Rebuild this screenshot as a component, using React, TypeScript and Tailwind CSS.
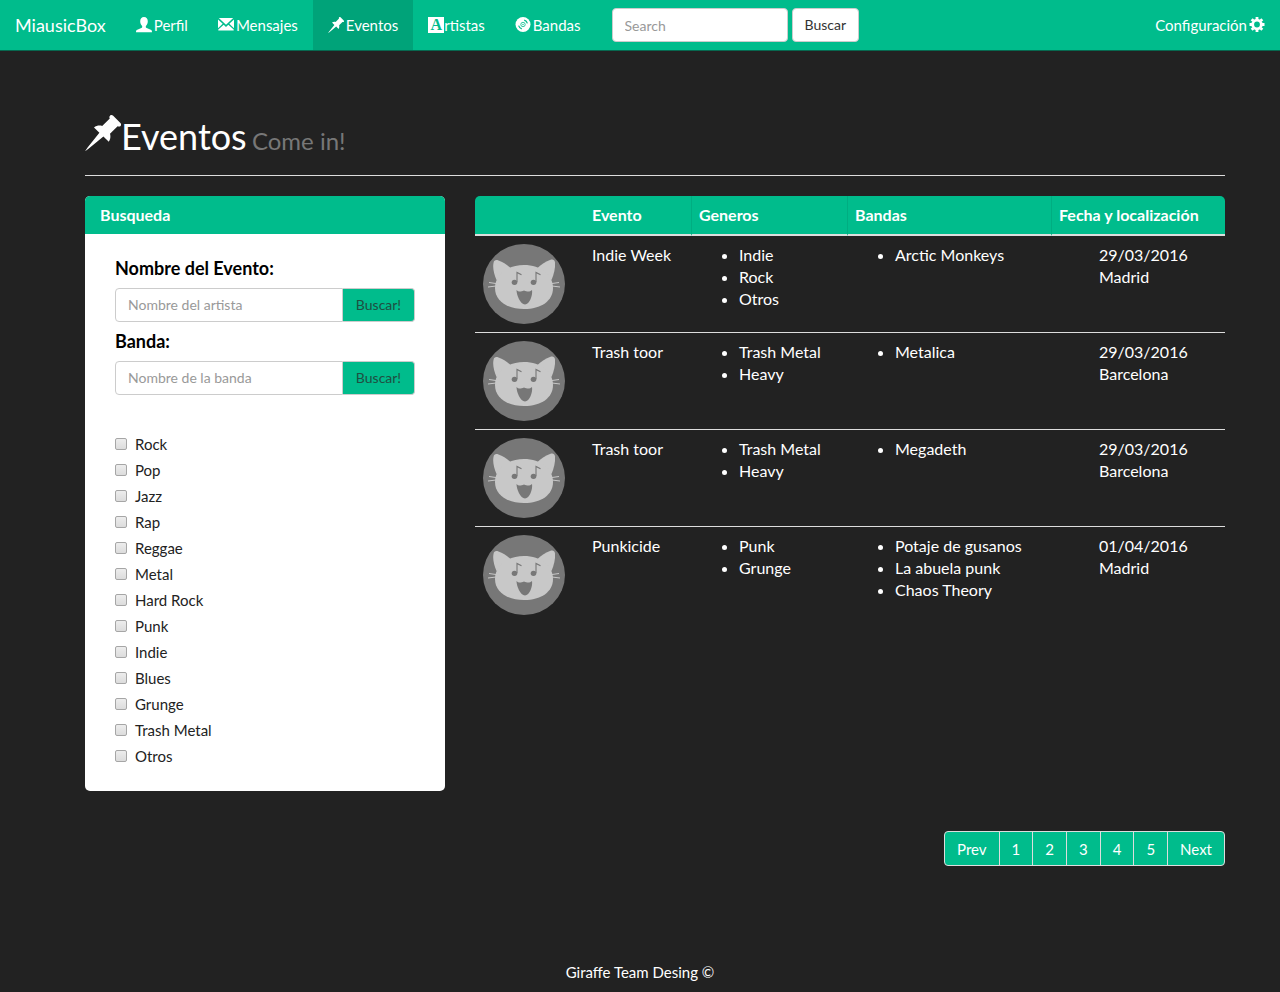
import React from 'react';

type IconProps = { className?: string };

function UserIcon({ className }: IconProps) {
  return (
    <svg viewBox="0 0 16 16" className={className} fill="currentColor" aria-hidden="true">
      <path d="M8 0C5.6 0 4.2 1.7 4.2 4.3C4.2 6.3 5 8 6.1 8.9C6.4 10.2 6.1 10.7 5.3 11.1L1.3 12.7C0.4 13.1 0 13.8 0 15.2H16C16 13.8 15.6 13.1 14.7 12.7L10.7 11.1C9.9 10.7 9.6 10.2 9.9 8.9C11 8 11.8 6.3 11.8 4.3C11.8 1.7 10.4 0 8 0Z" />
    </svg>
  );
}

function EnvelopeIcon({ className }: IconProps) {
  return (
    <svg viewBox="0 0 16 16" className={className} fill="currentColor" aria-hidden="true">
      <path d="M0.8 1H15.2L8 7.8Z" />
      <path d="M0 2.4L4.7 6.8L0 11.2Z" />
      <path d="M16 2.4L11.3 6.8L16 11.2Z" />
      <path d="M0.3 13.5V12.6L5.7 7.8L8 9.9L10.3 7.8L15.7 12.6V13.5Z" />
    </svg>
  );
}

function PinIcon({ className }: IconProps) {
  return (
    <svg viewBox="0 0 36 36" className={className} fill="currentColor" aria-hidden="true">
      <path d="M25.2 0.4C26.2 -0.3 27.4 0 28.2 0.8L35.4 8C36.2 8.8 36.4 10 35.6 10.9C34.8 11.7 33.6 11.6 32.6 11.2L25 18.8C25.8 21.4 25.4 24.4 23.8 26.8L18.4 21.6L3.8 33.6L0 36.4L2.6 32.4L14.4 17.8L9 12.4C11.4 10.6 14.6 10.2 17.2 11L24.8 3.6C24.2 2.6 24.2 1.2 25.2 0.4Z" />
    </svg>
  );
}

function LetterIcon({ className }: IconProps) {
  return (
    <span className={`${className} flex items-center justify-center bg-white font-['Liberation_Serif',serif] text-[16px] leading-4 font-bold text-[#00bc8c]`}>
      A
    </span>
  );
}

function DiscIcon({ className }: IconProps) {
  return (
    <svg viewBox="0 0 16 16" className={className} fill="none" aria-hidden="true">
      <circle cx="8" cy="7.500" r="7.500" fill="currentColor" />
      <circle cx="8" cy="7.500" r="2.200" stroke="#00bc8c" strokeWidth="0.800" />
      <circle cx="8" cy="7.500" r="0.700" fill="#00bc8c" />
      <path d="M9.200 3.200A4.600 4.600 0 0 1 12.400 6.300M3.600 8.700A4.600 4.600 0 0 0 6.800 11.800" stroke="#00bc8c" strokeWidth="1.200" />
    </svg>
  );
}

function GearIcon({ className }: IconProps) {
  return (
    <svg viewBox="0 0 16 16" className={className} fill="none" stroke="currentColor" aria-hidden="true">
      <circle cx="8" cy="7.500" r="4.300" strokeWidth="2.800" />
      <path
        d="M8 0V2.500M8 12.500V15M0.500 7.500H3M13 7.500H15.500M2.700 2.200L4.300 3.800M11.700 11.200L13.300 12.800M13.300 2.200L11.700 3.800M4.300 11.200L2.700 12.800"
        strokeWidth="2.800"
      />
    </svg>
  );
}

function CatAvatar() {
  return (
    <svg viewBox="0 0 82 80" className="h-20 w-[82px]" role="img" aria-label="Evento">
      <ellipse cx="41" cy="40" rx="41" ry="40" fill="#777777" />
      <g fill="#c8c8c8">
        <path d="M13.500 36C11 30 9.500 24 10.500 19C11 16 13 15.500 15.500 16.500C20 18 24 20.500 28 24.500Z" />
        <path d="M68.500 36C71 30 72.500 24 72 18.500C71.500 15.500 69.500 15 67 16C62 18 58 20.500 54 24.500Z" />
        <path d="M41 21C58 21 70 31 70 44C70 57 58 65 41 65C24 65 12 57 12 44C12 31 24 21 41 21Z" />
      </g>
      <path d="M6 38.500L13 39.500M5 43L13 42M76 38.500L69 39.500M77 43L69 42" stroke="#c8c8c8" strokeWidth="1" />
      <g fill="#777777">
        <ellipse cx="31.500" cy="38.300" rx="2.800" ry="2.600" />
        <ellipse cx="50.500" cy="38.300" rx="2.800" ry="2.600" />
        <path d="M33.500 46C36 48.500 38 47.500 41 46.500C44 47.500 46 48.500 49 46C50 51 46.500 60.500 42 60.500C37.500 60.500 33.500 51 33.500 46Z" />
      </g>
      <path d="M34 38V28.500L38.500 30.800M53 38V28.500L57.500 30.800" fill="none" stroke="#777777" strokeWidth="1.100" />
    </svg>
  );
}

const links = [
  { label: 'Perfil', Icon: UserIcon, gap: 'gap-0.5', active: false },
  { label: 'Mensajes', Icon: EnvelopeIcon, gap: 'gap-0.5', active: false },
  { label: 'Eventos', Icon: PinIcon, gap: 'gap-0.5', active: true },
  { label: 'rtistas', Icon: LetterIcon, gap: 'gap-0', active: false },
  { label: 'Bandas', Icon: DiscIcon, gap: 'gap-0.5', active: false },
];

const genres = ['Rock', 'Pop', 'Jazz', 'Rap', 'Reggae', 'Metal', 'Hard Rock', 'Punk', 'Indie', 'Blues', 'Grunge', 'Trash Metal', 'Otros'];

const events = [
  { name: 'Indie Week', genres: ['Indie', 'Rock', 'Otros'], bands: ['Arctic Monkeys'], date: '29/03/2016', city: 'Madrid' },
  { name: 'Trash toor', genres: ['Trash Metal', 'Heavy'], bands: ['Metalica'], date: '29/03/2016', city: 'Barcelona' },
  { name: 'Trash toor', genres: ['Trash Metal', 'Heavy'], bands: ['Megadeth'], date: '29/03/2016', city: 'Barcelona' },
  { name: 'Punkicide', genres: ['Punk', 'Grunge'], bands: ['Potaje de gusanos', 'La abuela punk', 'Chaos Theory'], date: '01/04/2016', city: 'Madrid' },
];

const pages = ['Prev', '1', '2', '3', '4', '5', 'Next'];

function Navbar() {
  return (
    <nav className="flex min-h-[51px] flex-wrap items-stretch border-b border-[#07684f] bg-[#00bc8c] text-[15px] text-white">
      <a href="#" className="flex items-center px-[15px] text-[18px]">MiausicBox</a>
      {links.map(({ label, Icon, gap, active }) => (
        <a
          key={label}
          href="#"
          className={`flex items-center px-[15px] ${gap} ${active ? 'bg-[#00a379]' : ''}`}
        >
          <Icon className="size-4 shrink-0" />
          {label}
        </a>
      ))}
      <form className="flex items-center gap-1 pl-4 text-[14px]" onSubmit={(e) => e.preventDefault()}>
        <input
          type="search"
          aria-label="Search"
          placeholder="Search"
          className="h-[34px] w-44 rounded border border-[#cccccc] bg-white px-3 text-[#555555] placeholder:text-[#999999]"
        />
        <button type="submit" className="h-[34px] rounded border border-[#cccccc] bg-white px-3 text-[#333333]">
          Buscar
        </button>
      </form>
      <a href="#" className="ml-auto flex items-center gap-0.5 px-[15px]">
        Configuración
        <GearIcon className="size-4" />
      </a>
    </nav>
  );
}

function SearchField({ id, label, placeholder }: { id: string; label: string; placeholder: string }) {
  return (
    <div>
      <label htmlFor={id} className="block pb-2 text-[18px] leading-[23px] font-bold text-black">{label}</label>
      <div className="flex h-[34px] text-[14px]">
        <input
          id={id}
          type="text"
          placeholder={placeholder}
          className="min-w-0 flex-1 rounded-l border border-[#cccccc] bg-white px-3 text-[#555555] placeholder:text-[#999999]"
        />
        <button type="button" className="w-[72px] rounded-r border border-l-0 border-[#cccccc] bg-[#00bc8c] text-[#1f4f42]">
          Buscar!
        </button>
      </div>
    </div>
  );
}

function SearchPanel() {
  return (
    <section className="overflow-hidden rounded-[5px] bg-white">
      <h2 className="bg-[#00bc8c] px-[15px] py-2 text-[16px] leading-[22px] font-bold text-white">Busqueda</h2>
      <div className="px-[30px] pt-[23px] pb-[22px]">
        <div className="flex flex-col gap-2">
          <SearchField id="evento" label="Nombre del Evento:" placeholder="Nombre del artista" />
          <SearchField id="banda" label="Banda:" placeholder="Nombre de la banda" />
        </div>
        <div className="flex flex-col items-start pt-9">
          {genres.map((g) => (
            <label key={g} className="flex h-[26px] items-center gap-2 text-[15px] text-[#222222]">
              <input
                type="checkbox"
                className="size-3 appearance-none rounded-[2px] border border-[#a6a6a6] bg-linear-to-b from-[#ededed] to-[#dcdcdc] checked:from-[#00bc8c] checked:to-[#00a379]"
              />
              {g}
            </label>
          ))}
        </div>
      </div>
    </section>
  );
}

function EventsTable() {
  return (
    <table className="w-full table-fixed border-separate border-spacing-0 text-left text-[16px] leading-[22px]">
      <colgroup>
        <col className="w-[109px]" />
        <col className="w-[107px]" />
        <col className="w-[156px]" />
        <col className="w-[204px]" />
        <col />
      </colgroup>
      <thead>
        <tr>
          <th className="rounded-tl-[5px] border-b-2 border-[#dddddd] bg-[#00bc8c] p-2" aria-label="Imagen" />
          <th className="border-b-2 border-[#dddddd] bg-[#00bc8c] p-2 font-bold">Evento</th>
          <th className="border-b-2 border-l border-b-[#dddddd] border-l-[#00ad81] bg-[#00bc8c] py-2 pr-2 pl-[7px] font-bold">Generos</th>
          <th className="border-b-2 border-l border-b-[#dddddd] border-l-[#00ad81] bg-[#00bc8c] py-2 pr-2 pl-[7px] font-bold">Bandas</th>
          <th className="rounded-tr-[5px] border-b-2 border-l border-b-[#dddddd] border-l-[#00ad81] bg-[#00bc8c] py-2 pr-2 pl-[7px] font-bold">
            Fecha y localización
          </th>
        </tr>
      </thead>
      <tbody className="[&>tr+tr>td]:border-t [&>tr+tr>td]:border-[#dddddd] [&_td]:p-2 [&_td]:align-top">
        {events.map((e, i) => (
          <tr key={i}>
            <td><CatAvatar /></td>
            <td>{e.name}</td>
            <td>
              <ul className="list-disc pl-10">
                {e.genres.map((g) => <li key={g}>{g}</li>)}
              </ul>
            </td>
            <td>
              <ul className="list-disc pl-10">
                {e.bands.map((b) => <li key={b}>{b}</li>)}
              </ul>
            </td>
            <td>
              <ul className="pl-10">
                <li>{e.date}</li>
                <li>{e.city}</li>
              </ul>
            </td>
          </tr>
        ))}
      </tbody>
    </table>
  );
}

export default function App() {
  return (
    <div className="flex min-h-screen flex-col bg-[#222222] font-['Lato',sans-serif] text-[16px] leading-[22px] text-white">
      <Navbar />
      <main className="mx-auto w-full max-w-[1170px] pt-[60px] pl-[30px]">
        <header className="mb-5 flex h-[65px] items-start border-b border-[#dddddd]">
          <PinIcon className="mt-1 size-9 shrink-0" />
          <h1 className="text-[36px] leading-[50px]">
            Eventos <small className="-ml-1 text-[24px] text-[#777777]">Come in!</small>
          </h1>
        </header>
        <div className="grid grid-cols-12 items-start gap-[30px]">
          <div className="col-span-4"><SearchPanel /></div>
          <div className="col-span-8"><EventsTable /></div>
        </div>
        <nav className="mt-10 flex justify-end text-[15px]" aria-label="Paginación">
          <ul className="flex divide-x divide-[#dddddd] overflow-hidden rounded border border-[#dddddd] bg-[#00bc8c]">
            {pages.map((p) => (
              <li key={p}>
                <a href="#" className="flex h-[33px] items-center px-3">{p}</a>
              </li>
            ))}
          </ul>
        </nav>
      </main>
      <footer className="mt-auto pb-[9px] text-center text-[15px]">Giraffe Team Desing ©</footer>
    </div>
  );
}
